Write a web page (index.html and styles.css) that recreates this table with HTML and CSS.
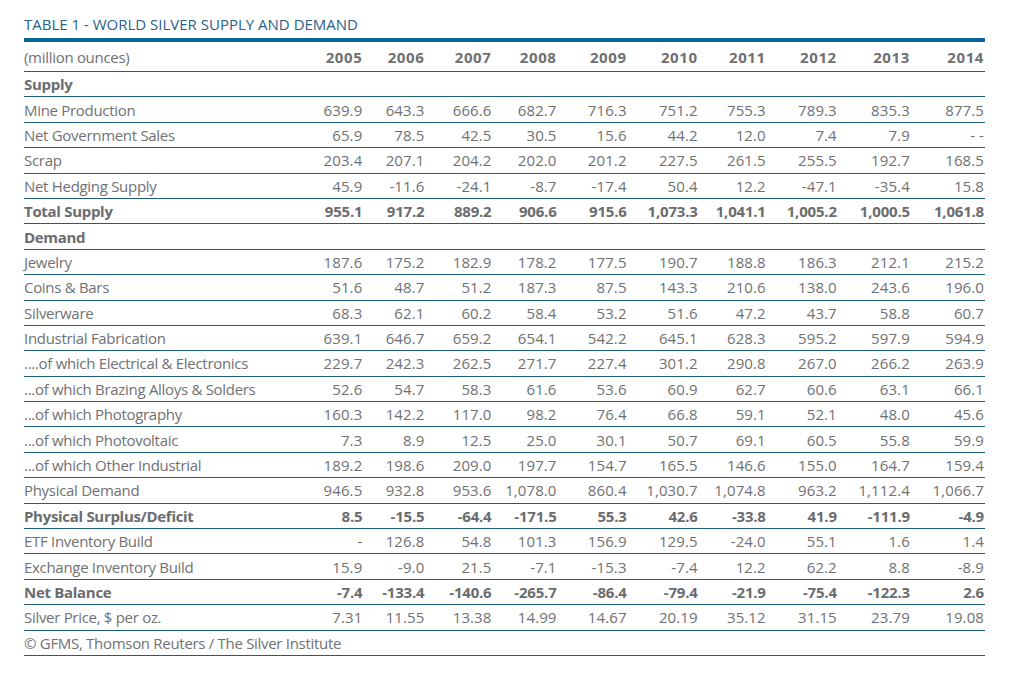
FILE: index.html
```html
<!DOCTYPE html>
<html lang="en">
<head>
<meta charset="utf-8">
<title>Table 1 - World Silver Supply and Demand</title>
<link rel="stylesheet" href="styles.css">
</head>
<body>
<div class="page">
  <h1 class="title">TABLE 1 - WORLD SILVER SUPPLY AND DEMAND</h1>
  <table class="data">
    <colgroup>
      <col class="c-label">
      <col class="c1"><col class="c2"><col class="c3"><col class="c4"><col class="c5">
      <col class="c6"><col class="c7"><col class="c8"><col class="c9"><col class="c10">
    </colgroup>
    <thead>
      <tr class="head">
        <th class="label unit">(million ounces)</th>
        <th>2005</th><th>2006</th><th>2007</th><th>2008</th><th>2009</th>
        <th>2010</th><th>2011</th><th>2012</th><th>2013</th><th>2014</th>
      </tr>
    </thead>
    <tbody>
      <tr class="bold"><td class="label">Supply</td><td></td><td></td><td></td><td></td><td></td><td></td><td></td><td></td><td></td><td></td></tr>
      <tr><td class="label">Mine Production</td><td>639.9</td><td>643.3</td><td>666.6</td><td>682.7</td><td>716.3</td><td>751.2</td><td>755.3</td><td>789.3</td><td>835.3</td><td>877.5</td></tr>
      <tr><td class="label">Net Government Sales</td><td>65.9</td><td>78.5</td><td>42.5</td><td>30.5</td><td>15.6</td><td>44.2</td><td>12.0</td><td>7.4</td><td>7.9</td><td>- -</td></tr>
      <tr><td class="label">Scrap</td><td>203.4</td><td>207.1</td><td>204.2</td><td>202.0</td><td>201.2</td><td>227.5</td><td>261.5</td><td>255.5</td><td>192.7</td><td>168.5</td></tr>
      <tr><td class="label">Net Hedging Supply</td><td>45.9</td><td>-11.6</td><td>-24.1</td><td>-8.7</td><td>-17.4</td><td>50.4</td><td>12.2</td><td>-47.1</td><td>-35.4</td><td>15.8</td></tr>
      <tr class="bold"><td class="label">Total Supply</td><td>955.1</td><td>917.2</td><td>889.2</td><td>906.6</td><td>915.6</td><td>1,073.3</td><td>1,041.1</td><td>1,005.2</td><td>1,000.5</td><td>1,061.8</td></tr>
      <tr class="bold"><td class="label">Demand</td><td></td><td></td><td></td><td></td><td></td><td></td><td></td><td></td><td></td><td></td></tr>
      <tr><td class="label">Jewelry</td><td>187.6</td><td>175.2</td><td>182.9</td><td>178.2</td><td>177.5</td><td>190.7</td><td>188.8</td><td>186.3</td><td>212.1</td><td>215.2</td></tr>
      <tr><td class="label">Coins &amp; Bars</td><td>51.6</td><td>48.7</td><td>51.2</td><td>187.3</td><td>87.5</td><td>143.3</td><td>210.6</td><td>138.0</td><td>243.6</td><td>196.0</td></tr>
      <tr><td class="label">Silverware</td><td>68.3</td><td>62.1</td><td>60.2</td><td>58.4</td><td>53.2</td><td>51.6</td><td>47.2</td><td>43.7</td><td>58.8</td><td>60.7</td></tr>
      <tr><td class="label">Industrial Fabrication</td><td>639.1</td><td>646.7</td><td>659.2</td><td>654.1</td><td>542.2</td><td>645.1</td><td>628.3</td><td>595.2</td><td>597.9</td><td>594.9</td></tr>
      <tr><td class="label">....of which Electrical &amp; Electronics</td><td>229.7</td><td>242.3</td><td>262.5</td><td>271.7</td><td>227.4</td><td>301.2</td><td>290.8</td><td>267.0</td><td>266.2</td><td>263.9</td></tr>
      <tr><td class="label">...of which Brazing Alloys &amp; Solders</td><td>52.6</td><td>54.7</td><td>58.3</td><td>61.6</td><td>53.6</td><td>60.9</td><td>62.7</td><td>60.6</td><td>63.1</td><td>66.1</td></tr>
      <tr><td class="label">...of which Photography</td><td>160.3</td><td>142.2</td><td>117.0</td><td>98.2</td><td>76.4</td><td>66.8</td><td>59.1</td><td>52.1</td><td>48.0</td><td>45.6</td></tr>
      <tr><td class="label">...of which Photovoltaic</td><td>7.3</td><td>8.9</td><td>12.5</td><td>25.0</td><td>30.1</td><td>50.7</td><td>69.1</td><td>60.5</td><td>55.8</td><td>59.9</td></tr>
      <tr><td class="label">...of which Other Industrial</td><td>189.2</td><td>198.6</td><td>209.0</td><td>197.7</td><td>154.7</td><td>165.5</td><td>146.6</td><td>155.0</td><td>164.7</td><td>159.4</td></tr>
      <tr><td class="label">Physical Demand</td><td>946.5</td><td>932.8</td><td>953.6</td><td>1,078.0</td><td>860.4</td><td>1,030.7</td><td>1,074.8</td><td>963.2</td><td>1,112.4</td><td>1,066.7</td></tr>
      <tr class="bold"><td class="label">Physical Surplus/Deficit</td><td>8.5</td><td>-15.5</td><td>-64.4</td><td>-171.5</td><td>55.3</td><td>42.6</td><td>-33.8</td><td>41.9</td><td>-111.9</td><td>-4.9</td></tr>
      <tr><td class="label">ETF Inventory Build</td><td>-</td><td>126.8</td><td>54.8</td><td>101.3</td><td>156.9</td><td>129.5</td><td>-24.0</td><td>55.1</td><td>1.6</td><td>1.4</td></tr>
      <tr><td class="label">Exchange Inventory Build</td><td>15.9</td><td>-9.0</td><td>21.5</td><td>-7.1</td><td>-15.3</td><td>-7.4</td><td>12.2</td><td>62.2</td><td>8.8</td><td>-8.9</td></tr>
      <tr class="bold"><td class="label">Net Balance</td><td>-7.4</td><td>-133.4</td><td>-140.6</td><td>-265.7</td><td>-86.4</td><td>-79.4</td><td>-21.9</td><td>-75.4</td><td>-122.3</td><td>2.6</td></tr>
      <tr><td class="label">Silver Price, $ per oz.</td><td>7.31</td><td>11.55</td><td>13.38</td><td>14.99</td><td>14.67</td><td>20.19</td><td>35.12</td><td>31.15</td><td>23.79</td><td>19.08</td></tr>
    </tbody>
    <tfoot>
      <tr><td class="label source" colspan="11">© GFMS, Thomson Reuters / The Silver Institute</td></tr>
    </tfoot>
  </table>
</div>
</body>
</html>
```

FILE: styles.css
```css
html, body {
  margin: 0;
  padding: 0;
  background: #ffffff;
}

.page {
  width: 961px;
  padding: 0 0 0 24px;
  font-family: "Open Sans", "Liberation Sans", sans-serif;
  color: #707173;
}

.title {
  margin: 0;
  box-sizing: border-box;
  height: 42px;
  padding-top: 14px;
  font-size: 15px;
  line-height: 20px;
  font-weight: 400;
  color: #2a5f87;
  letter-spacing: 0;
  border-bottom: 4px solid #0b6594;
}

.data {
  width: 961px;
  border-collapse: collapse;
  table-layout: fixed;
  font-size: 15px;
  letter-spacing: 0.1px;
}

.c-label { width: 277px; }
.c1 { width: 62px; }
.c2 { width: 62px; }
.c3 { width: 67px; }
.c4 { width: 65px; }
.c5 { width: 70px; }
.c6 { width: 71px; }
.c7 { width: 68px; }
.c8 { width: 71px; }
.c9 { width: 73px; }
.c10 { width: 74px; }

.data th,
.data td {
  padding: 0 1px 0 0;
  text-align: right;
  white-space: nowrap;
  border-bottom: 1px solid #1f5d7a;
  line-height: 18px;
}

.data td {
  height: 24.4px;
}

.data th {
  height: 29px;
  font-weight: 700;
  color: #6f7072;
  letter-spacing: 0.6px;
}

.data .label {
  text-align: left;
  padding: 0;
  letter-spacing: -0.3px;
}

.data .unit {
  font-weight: 400;
  color: #707173;
}

.bold td {
  font-weight: 700;
  color: #6b6c6e;
  letter-spacing: -0.2px;
}

.source {
  color: #707173;
}
```
